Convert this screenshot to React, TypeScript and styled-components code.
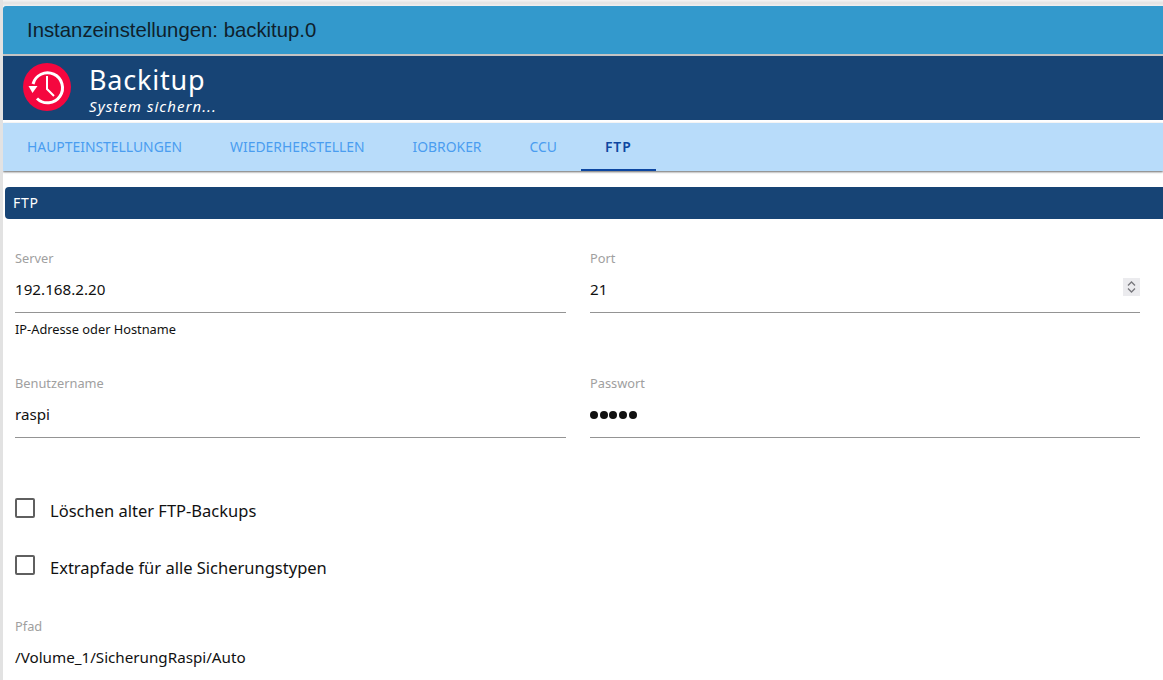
import React from "react";
import styled, { createGlobalStyle } from "styled-components";

const Global = createGlobalStyle`
  html, body { margin: 0; padding: 0; background: #fff; overflow: hidden; }
  body { font-family: "Noto Sans", "Open Sans", sans-serif; }
`;

const Page = styled.div`
  width: 1163px;
  height: 680px;
  overflow: hidden;
  box-sizing: border-box;
  border-left: 3px solid #e2e2e2;
  background: #fff;
`;
const TopEdge = styled.div`
  height: 6px;
  margin-left: -3px;
  background: linear-gradient(#f4f4f4, #e2e2e2 50%, #f0f0f0);
`;
const TitleBar = styled.header`
  height: 48px;
  background: #3399cc;
  border-bottom: 2px solid #c4c4c4;
  border-radius: 3px 0 0 0;
  display: flex;
  align-items: center;
  padding-left: 24px;
  font: 20.33px "Liberation Sans", Arial, sans-serif;
  color: #0f1f2c;
`;
const Banner = styled.div`
  height: 64px;
  box-sizing: border-box;
  padding: 0 0 2px 20px;
  background: #174475;
  display: flex;
  align-items: center;
  color: #fff;
`;
const Logo = styled.svg`
  width: 48px;
  height: 48px;
  flex: none;
`;
const BannerText = styled.div`
  margin-left: 18px;
  display: flex;
  flex-direction: column;
  padding-top: 6px;
`;
const BannerTitle = styled.div`
  font-size: 27px;
  line-height: 32px;
  letter-spacing: 0.8px;
`;
const BannerSub = styled.div`
  font-size: 15px;
  line-height: 20px;
  font-style: italic;
  letter-spacing: 1.05px;
`;
const Tabs = styled.nav`
  margin-top: 3px;
  height: 48px;
  background: #b8dcfa;
  box-shadow: 0 1px 2px rgba(0, 0, 0, 0.6);
  display: flex;
`;
const Tab = styled.div<{ $active?: boolean }>`
  padding: 0 24px;
  height: 48px;
  box-sizing: border-box;
  display: flex;
  align-items: center;
  font-size: 13.9px;
  font-weight: ${(p) => (p.$active ? 600 : 400)};
  letter-spacing: ${(p) => (p.$active ? "0.9px" : "0")};
  color: ${(p) => (p.$active ? "#0d47a1" : "#4a9df0")};
  border-bottom: 2px solid ${(p) => (p.$active ? "#0d47a1" : "transparent")};
`;
const Section = styled.section`
  margin: 16px 0 0 2px;
  height: 32px;
  box-sizing: border-box;
  padding: 0 0 2px 8px;
  background: #174475;
  border-radius: 4px 0 0 4px;
  color: #fff;
  display: flex;
  align-items: center;
  font-size: 14px;
  letter-spacing: 0.7px;
`;
const Grid = styled.div`
  display: grid;
  grid-template-columns: 551px 550px;
  column-gap: 24px;
  padding: 31px 0 0 12px;
`;
const Field = styled.div<{ $h?: number }>`
  height: ${(p) => p.$h ?? 125}px;
`;
const Label = styled.div`
  font-size: 12.8px;
  line-height: 16px;
  color: #a0a0a0;
`;
const Value = styled.div`
  margin-top: 6px;
  height: 41px;
  box-sizing: border-box;
  border-bottom: 1px solid #949494;
  font-size: 15.2px;
  line-height: 34px;
  color: #111;
  display: flex;
  justify-content: space-between;
`;
const Help = styled.div`
  margin-top: 8px;
  font-size: 12.8px;
  line-height: 16px;
  color: #111;
`;
const Spinner = styled.svg`
  width: 17px;
  height: 18px;
  margin: 6px 0 0 0;
  background: #ebebee;
`;
const Dots = styled.span`
  display: flex;
  gap: 1.7px;
  align-items: center;
  height: 34px;
  padding-top: 1px;
`;
const Dot = styled.i`
  width: 8px;
  height: 8px;
  border-radius: 50%;
  background: #111;
`;
const Checks = styled.div`
  padding: 27px 0 0 12px;
  display: flex;
  flex-direction: column;
  gap: 36px;
`;
const CheckRow = styled.label`
  display: flex;
  align-items: center;
  height: 21px;
  font-size: 16.5px;
  color: #111;
`;
const Box = styled.span`
  width: 20px;
  height: 20px;
  box-sizing: border-box;
  border: 2px solid #5f5f5f;
  border-radius: 2px;
  margin-right: 15px;
  position: relative;
  top: -3px;
`;
const PathField = styled.div`
  padding: 40px 0 0 12px;
`;
const PathValue = styled(Value)`
  border: none;
`;

export default function App() {
  return (
    <Page>
      <Global />
      <TopEdge />
      <TitleBar>Instanzeinstellungen: backitup.0</TitleBar>
      <Banner>
        <Logo viewBox="0 0 48 48">
          <circle cx="24" cy="24" r="24" fill="#f5073f" />
          <path
            d="M10 21 A15 15 0 1 1 14 35.5"
            fill="none"
            stroke="#fff"
            strokeWidth="3"
          />
          <path d="M5.5 23 L14.5 23 L9.5 30 Z" fill="#fff" />
          <path
            d="M24 13 V26 L31 33"
            fill="none"
            stroke="#fff"
            strokeWidth="2"
          />
        </Logo>
        <BannerText>
          <BannerTitle>Backitup</BannerTitle>
          <BannerSub>System sichern...</BannerSub>
        </BannerText>
      </Banner>
      <Tabs>
        <Tab>HAUPTEINSTELLUNGEN</Tab>
        <Tab>WIEDERHERSTELLEN</Tab>
        <Tab>IOBROKER</Tab>
        <Tab>CCU</Tab>
        <Tab $active>FTP</Tab>
      </Tabs>
      <Section>FTP</Section>
      <Grid>
        <Field>
          <Label>Server</Label>
          <Value>192.168.2.20</Value>
          <Help>IP-Adresse oder Hostname</Help>
        </Field>
        <Field>
          <Label>Port</Label>
          <Value>
            21
            <Spinner viewBox="0 0 17 18">
              <path d="M5 7.5 L8.5 4 L12 7.5 M5 10.5 L8.5 14 L12 10.5" fill="none" stroke="#77777c" strokeWidth="1.3" />
            </Spinner>
          </Value>
        </Field>
        <Field $h={98}>
          <Label>Benutzername</Label>
          <Value>raspi</Value>
        </Field>
        <Field $h={98}>
          <Label>Passwort</Label>
          <Value>
            <Dots>
              <Dot /><Dot /><Dot /><Dot /><Dot />
            </Dots>
          </Value>
        </Field>
      </Grid>
      <Checks>
        <CheckRow><Box />Löschen alter FTP-Backups</CheckRow>
        <CheckRow><Box />Extrapfade für alle Sicherungstypen</CheckRow>
      </Checks>
      <PathField>
        <Label>Pfad</Label>
        <PathValue>/Volume_1/SicherungRaspi/Auto</PathValue>
      </PathField>
    </Page>
  );
}
